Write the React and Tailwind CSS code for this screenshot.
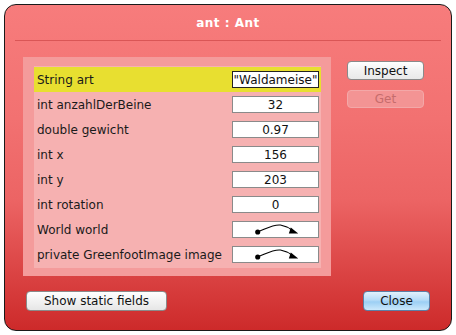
import React from "react";

const rows = [
  { label: "String art", value: '"Waldameise"', selected: true },
  { label: "int anzahlDerBeine", value: "32" },
  { label: "double gewicht", value: "0.97" },
  { label: "int x", value: "156" },
  { label: "int y", value: "203" },
  { label: "int rotation", value: "0" },
  { label: "World world", ref: true },
  { label: "private GreenfootImage image", ref: true },
];

function RefArrow() {
  return (
    <svg width="86" height="15" viewBox="0 0 86 15">
      <circle cx="25" cy="10" r="2.6" fill="#000" />
      <path d="M25 10 C 33 7, 41 2, 48 3 C 53 4, 57 6, 60 8.5" stroke="#000" strokeWidth="1.1" fill="none" />
      <polygon points="58.5,5.5 66,11.5 56.5,11.5" fill="#000" />
    </svg>
  );
}

export default function App() {
  return (
    <div
      className="w-[456px] h-[335px] bg-white pt-[4px] pl-[4px]"
      style={{ fontFamily: '"DejaVu Sans", "Liberation Sans", sans-serif' }}
    >
      <div className="w-[448px] h-[327px] rounded-[12px] border border-[#1a1a1a] bg-[linear-gradient(to_bottom,#f77c7c_0%,#f27171_35%,#ec6464_60%,#cd2a2a_100%)] flex flex-col overflow-hidden">
        <div className="h-[35px] flex items-center justify-center text-white font-bold text-[12px] tracking-[0.5px]">
          ant : Ant
        </div>
        <div className="h-px mx-[10px] bg-[#da5656]" />
        <div className="flex mt-[16px] pl-[18px]">
          <div className="w-[308px] h-[219px] bg-[#f49b9b] pl-[11px] pt-[9px]">
            <div className="w-[287px] h-[202px] bg-[#f6b1b1] pt-[1px]">
              {rows.map((r) => (
                <div
                  key={r.label}
                  className={
                    "h-[25px] flex items-center justify-between pl-[3px] pr-[2px] " +
                    (r.selected ? "bg-[#e8df30]" : "")
                  }
                >
                  <span className="text-[12px] text-[#1a1a1a] whitespace-nowrap">{r.label}</span>
                  <div
                    className={
                      "w-[87px] h-[17px] bg-white border flex items-center justify-center text-[12px] text-[#111] leading-none " +
                      (r.selected ? "border-[#222]" : "border-[#8a8a8a]")
                    }
                  >
                    {r.ref ? <RefArrow /> : r.value}
                  </div>
                </div>
              ))}
            </div>
          </div>
          <div className="ml-[16px] mt-[4px] flex flex-col">
            <button className="w-[77px] h-[19px] rounded-[4px] border border-[#8a8a8a] bg-[linear-gradient(to_bottom,#ffffff,#f2f2f2_50%,#e9e9e9)] text-[12px] text-[#111] flex items-center justify-center">
              Inspect
            </button>
            <button className="mt-[10px] w-[77px] h-[18px] rounded-[4px] border border-[#f3a8a8] bg-[#f39494] text-[12px] text-[#c66c6c] flex items-center justify-center">
              Get
            </button>
          </div>
        </div>
        <div className="flex justify-between mt-[15px] px-[21px]">
          <button className="w-[141px] h-[20px] rounded-[4px] border border-[#8a8a8a] bg-[linear-gradient(to_bottom,#ffffff,#f2f2f2_50%,#e6e6e6)] text-[12px] text-[#111] flex items-center justify-center">
            Show static fields
          </button>
          <button className="w-[67px] h-[20px] rounded-[4px] border border-[#5b7fa6] bg-[linear-gradient(to_bottom,#e2f1fc,#b5dbf7_45%,#9ccff4_55%,#cbe8fb)] text-[12px] text-[#111] flex items-center justify-center">
            Close
          </button>
        </div>
      </div>
    </div>
  );
}
